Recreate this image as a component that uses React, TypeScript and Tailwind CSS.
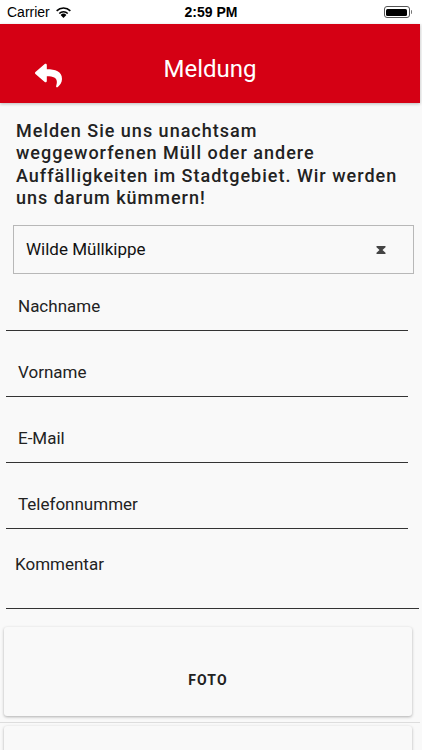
import React from "react";
import { FaReply } from "react-icons/fa";

function Wifi() {
  return (
    <svg width="17" height="12" viewBox="0 0 17 12">
      <path d="M8.5 12 L5.6 8.9 A4.2 4.2 0 0 1 11.4 8.9 Z" fill="#000" />
      <path d="M3.7 6.9 A6.9 6.9 0 0 1 13.3 6.9 L12.2 8.1 A5.3 5.3 0 0 0 4.8 8.1 Z" fill="#000" />
      <path d="M1.1 4.2 A10.7 10.7 0 0 1 15.9 4.2 L14.8 5.4 A9.1 9.1 0 0 0 2.2 5.4 Z" fill="#000" />
    </svg>
  );
}

function Battery() {
  return (
    <div className="flex items-center">
      <div className="w-[26px] h-[12px] rounded-[3px] border border-[#555] p-[1.5px]">
        <div className="w-full h-full bg-black rounded-[1.5px]" />
      </div>
      <div className="w-[1.5px] h-[4px] bg-[#777] rounded-r-sm ml-[1px]" />
    </div>
  );
}

function Field({ label, h }: { label: string; h: string }) {
  return (
    <div className={`${h} mx-[6px] w-[402px] flex items-end pb-[14px] pl-[12px] border-b-[1.5px] border-[#333]`}>
      <span className="text-[17px] leading-[20px] text-[#222]">{label}</span>
    </div>
  );
}

export default function App() {
  return (
    <div className="w-[422px] h-[750px] overflow-hidden bg-[#f9f9f9]" style={{ fontFamily: "Roboto, 'Liberation Sans', sans-serif" }}>
      <div className="h-[24px] bg-white flex items-center px-[7px] relative">
        <span className="text-[14px] text-black flex items-center gap-[5px]" style={{ fontFamily: "'Liberation Sans', Arial, sans-serif" }}>
          Carrier <Wifi />
        </span>
        <span className="absolute left-0 right-0 text-center text-[14px] font-bold text-black" style={{ fontFamily: "'Liberation Sans', Arial, sans-serif" }}>
          2:59 PM
        </span>
        <div className="ml-auto mr-[3px]">
          <Battery />
        </div>
      </div>
      <div className="h-[79px] w-[420px] bg-[#d50014] flex items-center relative shadow-[0_1px_3px_rgba(0,0,0,0.25)]">
        <div className="absolute left-[35px] top-[38px] text-white">
          <FaReply size={27} />
        </div>
        <div className="w-full text-center text-white text-[24px] leading-[28px] pt-[11px]">Meldung</div>
      </div>
      <div className="pl-[16px] pt-[17px] text-[18px] leading-[22.3px] font-medium tracking-[1px] text-[#222] whitespace-nowrap">
        Melden Sie uns unachtsam
        <br />
        weggeworfenen Müll oder andere
        <br />
        Auffälligkeiten im Stadtgebiet. Wir werden
        <br />
        uns darum kümmern!
      </div>
      <div className="mt-[16px] ml-[13px] w-[401px] h-[49px] border border-[#b8b8b8] flex items-center pl-[12px] pr-[27px]">
        <span className="text-[17px] text-[#111]">Wilde Müllkippe</span>
        <svg className="ml-auto" width="10" height="8" viewBox="0 0 10 8">
          <polygon points="0.5,0 9.5,0 9.5,1.3 6.5,4 9.5,6.7 9.5,8 0.5,8 0.5,6.7 3.5,4 0.5,1.3" fill="#444" />
        </svg>
      </div>
      <Field label="Nachname" h="h-[57px]" />
      <Field label="Vorname" h="h-[66px]" />
      <Field label="E-Mail" h="h-[66px]" />
      <Field label="Telefonnummer" h="h-[66px]" />
      <div className="h-[80px] mx-[6px] w-[413px] border-b-[1.5px] border-[#333] pl-[9px] pt-[24px]">
        <span className="text-[17px] leading-[20px] text-[#222]">Kommentar</span>
      </div>
      <div className="mt-[18px] ml-[4px] w-[408px] h-[89px] bg-[#f9f9f9] rounded-[3px] shadow-[0_1px_3px_rgba(0,0,0,0.3)] flex justify-center pt-[45px]">
        <span className="text-[14px] leading-[16px] font-bold tracking-[1.1px] text-[#222]">FOTO</span>
      </div>
      <div className="mt-[6px] h-px w-[420px] bg-[#ddd]" />
      <div className="mt-[3px] ml-[4px] w-[408px] h-[89px] bg-[#f9f9f9] rounded-[3px] shadow-[0_1px_3px_rgba(0,0,0,0.3)]" />
    </div>
  );
}
